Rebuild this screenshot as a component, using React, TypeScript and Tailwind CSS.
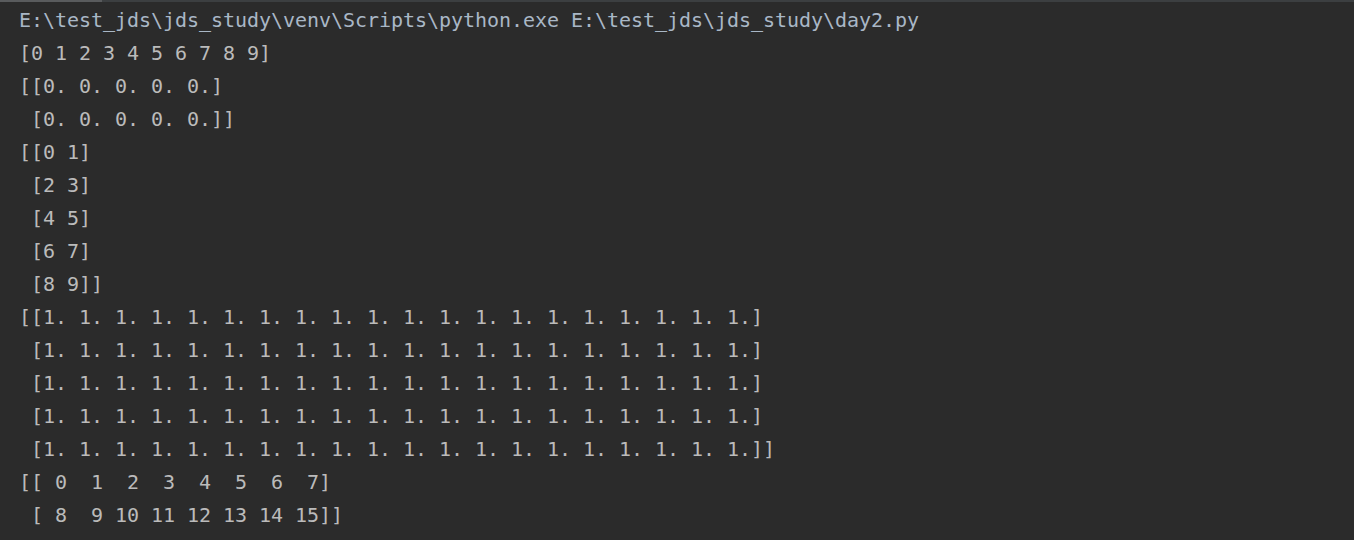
import React from "react";

const lines: string[] = [
  "[0 1 2 3 4 5 6 7 8 9]",
  "[[0. 0. 0. 0. 0.]",
  " [0. 0. 0. 0. 0.]]",
  "[[0 1]",
  " [2 3]",
  " [4 5]",
  " [6 7]",
  " [8 9]]",
  "[[1. 1. 1. 1. 1. 1. 1. 1. 1. 1. 1. 1. 1. 1. 1. 1. 1. 1. 1. 1.]",
  " [1. 1. 1. 1. 1. 1. 1. 1. 1. 1. 1. 1. 1. 1. 1. 1. 1. 1. 1. 1.]",
  " [1. 1. 1. 1. 1. 1. 1. 1. 1. 1. 1. 1. 1. 1. 1. 1. 1. 1. 1. 1.]",
  " [1. 1. 1. 1. 1. 1. 1. 1. 1. 1. 1. 1. 1. 1. 1. 1. 1. 1. 1. 1.]",
  " [1. 1. 1. 1. 1. 1. 1. 1. 1. 1. 1. 1. 1. 1. 1. 1. 1. 1. 1. 1.]]",
  "[[ 0  1  2  3  4  5  6  7]",
  " [ 8  9 10 11 12 13 14 15]]",
];

const App: React.FC = () => {
  return (
    <div className="w-[1354px] h-[540px] bg-[#2b2b2b] overflow-hidden">
      {/* horizontal scrollbar on top */}
      <div className="flex h-[2px] bg-[#3c3f41]">
        <div className="w-[102px] bg-[#595b5d]" />
      </div>
      <div
        className="pl-[19px] pt-[2px] text-[20px] leading-[33px] tracking-[-0.04px] whitespace-pre text-[#bbbbbb]"
        style={{ fontFamily: '"DejaVu Sans Mono", monospace' }}
      >
        <div className="text-[#a9b7c6]">
          E:\test_jds\jds_study\venv\Scripts\python.exe E:\test_jds\jds_study\day2.py
        </div>
        {lines.map((line, i) => (
          <div key={i}>{line}</div>
        ))}
      </div>
    </div>
  );
};

export default App;
